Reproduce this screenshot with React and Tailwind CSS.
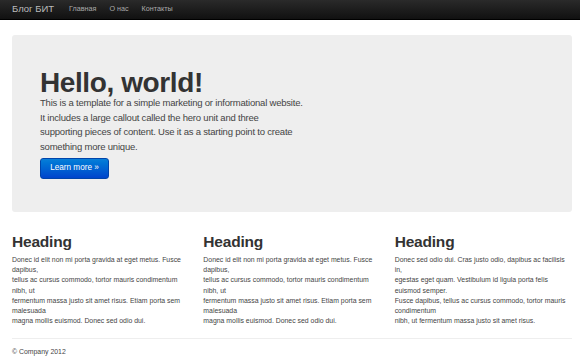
export default function App() {
  const cols = [
    [
      'Donec id elit non mi porta gravida at eget metus. Fusce dapibus,',
      'tellus ac cursus commodo, tortor mauris condimentum nibh, ut',
      'fermentum massa justo sit amet risus. Etiam porta sem malesuada',
      'magna mollis euismod. Donec sed odio dui.',
    ],
    [
      'Donec id elit non mi porta gravida at eget metus. Fusce dapibus,',
      'tellus ac cursus commodo, tortor mauris condimentum nibh, ut',
      'fermentum massa justo sit amet risus. Etiam porta sem malesuada',
      'magna mollis euismod. Donec sed odio dui.',
    ],
    [
      'Donec sed odio dui. Cras justo odio, dapibus ac facilisis in,',
      'egestas eget quam. Vestibulum id ligula porta felis euismod semper.',
      'Fusce dapibus, tellus ac cursus commodo, tortor mauris condimentum',
      'nibh, ut fermentum massa justo sit amet risus.',
    ],
  ];

  return (
    <div className="w-[580px] h-[362px] overflow-hidden bg-white text-[#333] [font-family:'Liberation_Sans',Arial,sans-serif]">
      {/* navbar */}
      <div className="h-[20px] bg-gradient-to-b from-[#2a2a2a] to-[#111] border-b border-[#000] flex items-center pl-3">
        <span className="text-[9.5px] text-[#bbb] mr-[15px]">Блог БИТ</span>
        <nav className="flex gap-[13px] text-[7.2px] text-[#aaa]">
          <span>Главная</span>
          <span>О нас</span>
          <span>Контакты</span>
        </nav>
      </div>

      <div className="pl-3 pr-2">
        {/* hero */}
        <div className="mt-[15px] h-[177px] bg-[#eeeeee] rounded-[3px] px-[28px] pt-[34px]">
          <h1 className="text-[28px] leading-[28px] font-bold tracking-[-0.4px] text-[#333]">Hello, world!</h1>
          <p className="mt-[-1px] text-[9.5px] leading-[14.5px] tracking-[-0.2px] text-[#444] whitespace-nowrap">
            This is a template for a simple marketing or informational website.<br />
            It includes a large callout called the hero unit and three<br />
            supporting pieces of content. Use it as a starting point to create<br />
            something more unique.
          </p>
          <button className="mt-[4px] w-[69px] h-[21px] rounded-[3px] bg-gradient-to-b from-[#0a7fd8] to-[#0044cc] border border-[#0044aa] text-white text-[8.2px] flex items-center justify-center">
            Learn more »
          </button>
        </div>

        {/* columns */}
        <div className="grid grid-cols-3 gap-[14px] mt-[20px]">
          {cols.map((lines, i) => (
            <div key={i}>
              <h2 className="text-[15.5px] leading-[20px] font-bold tracking-[-0.2px] text-[#333]">Heading</h2>
              <p className="mt-[3px] text-[6.9px] leading-[10.2px] text-[#444] w-[178px]">
                {lines.map((l, j) => (
                  <span key={j}>
                    {l}
                    <br />
                  </span>
                ))}
              </p>
            </div>
          ))}
        </div>

        <hr className="mt-[12px] border-[#eee]" />
        <p className="mt-[8px] text-[6.9px] text-[#444]">© Company 2012</p>
      </div>
    </div>
  );
}
